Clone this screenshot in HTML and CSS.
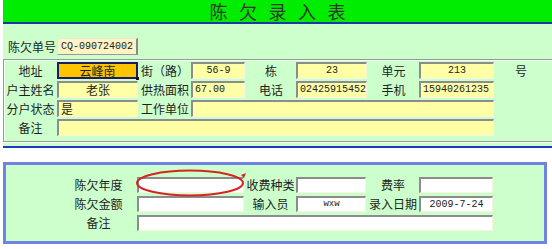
FILE: index.html
```html
<!DOCTYPE html>
<html lang="zh-CN">
<head>
<meta charset="utf-8">
<title>陈欠录入表</title>
<link rel="stylesheet" href="styles.css">
</head>
<body>
<div class="page">
  <div class="titlebar"><h1 class="title">陈欠录入表</h1></div>
  <div class="upper">
    <div class="billrow">
      <span class="billlbl">陈欠单号</span>
      <span class="bill">CQ-090724002</span>
    </div>
    <div class="fs">
      <div class="grid">
        <span class="lbl">地址</span>
        <span class="inp focus c">云峰南</span>
        <span class="lbl">街（路）</span>
        <span class="inp num c">56-9</span>
        <span class="lbl">栋</span>
        <span class="inp num c">23</span>
        <span class="lbl">单元</span>
        <span class="inp num c">213</span>
        <span class="lbl hao">号</span>

        <span class="lbl">户主姓名</span>
        <span class="inp c">老张</span>
        <span class="lbl">供热面积</span>
        <span class="inp num">67.00</span>
        <span class="lbl">电话</span>
        <span class="inp num">02425915452</span>
        <span class="lbl">手机</span>
        <span class="inp num">15940261235</span>
        <span></span>

        <span class="lbl">分户状态</span>
        <span class="inp">是</span>
        <span class="lbl">工作单位</span>
        <span class="inp span5"></span>
        <span></span>

        <span class="lbl">备注</span>
        <span class="inp span7"></span>
        <span></span>
      </div>
    </div>
  </div>
  <div class="sep"></div>
  <div class="lower">
    <div class="box">
      <div class="grid2">
        <span class="lbl">陈欠年度</span>
        <span class="inp w"></span>
        <span class="lbl">收费种类</span>
        <span class="inp w"></span>
        <span class="lbl">费率</span>
        <span class="inp w"></span>

        <span class="lbl">陈欠金额</span>
        <span class="inp w"></span>
        <span class="lbl">输入员</span>
        <span class="inp w num small c">wxw</span>
        <span class="lbl">录入日期</span>
        <span class="inp w num c">2009-7-24</span>

        <span class="lbl">备注</span>
        <span class="inp w span5"></span>
      </div>
      <svg class="ring" width="116" height="30" viewBox="0 0 116 30">
        <ellipse cx="55" cy="15" rx="53" ry="12.5" fill="none" stroke="#d62424" stroke-width="2"/>
        <polygon points="106,7 111,5 109,10" fill="#d62424"/>
      </svg>
    </div>
  </div>
</div>
</body>
</html>
```
FILE: styles.css
```css
html, body {
  margin: 0;
  padding: 0;
  background: #ffffff;
}
body {
  font-family: "Noto Sans CJK SC", "Noto Sans", sans-serif;
  font-size: 12px;
  color: #1e1e1e;
}
.page {
  margin-left: 3px;
  width: 549px;
}
.titlebar {
  height: 22px;
  background: #00ec00;
  border-bottom: 2px solid #1a3aa0;
  display: flex;
  align-items: center;
  justify-content: center;
}
.title {
  margin: 0;
  font-size: 18px;
  font-weight: normal;
  line-height: 22px;
  letter-spacing: 11.5px;
  padding-left: 11.5px;
  color: #2a3a2a;
}
.upper {
  background: #ccffcc;
  padding-top: 14px;
  padding-bottom: 4px;
}
.billrow {
  display: flex;
  align-items: center;
  height: 17px;
  padding-left: 5px;
}
.billlbl {
  width: 49px;
  line-height: 17px;
}
.bill {
  box-sizing: border-box;
  width: 81px;
  height: 17px;
  background: #fdf3c4;
  border-top: 1px solid #e8e8d8;
  border-left: 1px solid #e8e8d8;
  border-right: 2px solid #8a8a8a;
  border-bottom: 1px solid #9a9a9a;
  font-family: "Liberation Mono", monospace;
  font-size: 10px;
  line-height: 15px;
  padding-left: 3px;
  color: #222;
}
.fs {
  margin-top: 4px;
  border-top: 1px solid #9a9a9a;
  border-left: 1px solid #9a9a9a;
  border-bottom: 1px solid #9a9a9a;
  box-shadow: inset 1px 1px 0 #f4fff4, 0 1px 0 #f4fff4;
  padding: 2px 0 5px 0;
}
.grid {
  display: grid;
  grid-template-columns: 53px 82px 52px 55px 50px 72px 51px 76px 1fr;
  grid-auto-rows: 17px;
  row-gap: 2px;
}
.lbl {
  text-align: center;
  line-height: 17px;
  white-space: nowrap;
}
.hao {
  text-align: left;
  padding-left: 20px;
}
.inp {
  box-sizing: border-box;
  height: 17px;
  margin-right: 1px;
  background: #ffffa6;
  border-top: 2px solid #8c8c8c;
  border-left: 2px solid #8c8c8c;
  border-right: 1px solid #f6f6e0;
  border-bottom: 1px solid #f6f6e0;
  line-height: 14px;
  padding-left: 2px;
  white-space: nowrap;
  overflow: hidden;
}
.inp.c {
  text-align: center;
  padding-left: 0;
}
.inp.num {
  font-family: "Liberation Mono", monospace;
  font-size: 10px;
  color: #222;
}
.inp.focus {
  background: #ffc400;
  border: 2px solid #1c1c66;
  line-height: 13px;
  position: relative;
  overflow: visible;
}
.inp.focus::after {
  content: "";
  position: absolute;
  right: -3px;
  bottom: -3px;
  width: 3px;
  height: 3px;
  background: #111;
}
.span5 { grid-column: span 5; }
.span7 { grid-column: span 7; }
.sep {
  height: 2px;
  background: #1a3ac0;
}
.lower {
  padding-top: 14px;
}
.box {
  position: relative;
  box-sizing: border-box;
  width: 544px;
  height: 82px;
  background: #ccffcc;
  border: 3px solid #7082e2;
  padding: 12px 0 0 54px;
}
.grid2 {
  display: grid;
  grid-template-columns: 77px 108px 51px 71px 52px 75px;
  grid-auto-rows: 16px;
  row-gap: 3px;
}
.grid2 .lbl {
  line-height: 16px;
}
.inp.w {
  height: 16px;
  background: #ffffff;
  line-height: 13px;
}
.inp.small {
  font-size: 9px;
}
.ring {
  position: absolute;
  left: 129px;
  top: 3px;
}
```
